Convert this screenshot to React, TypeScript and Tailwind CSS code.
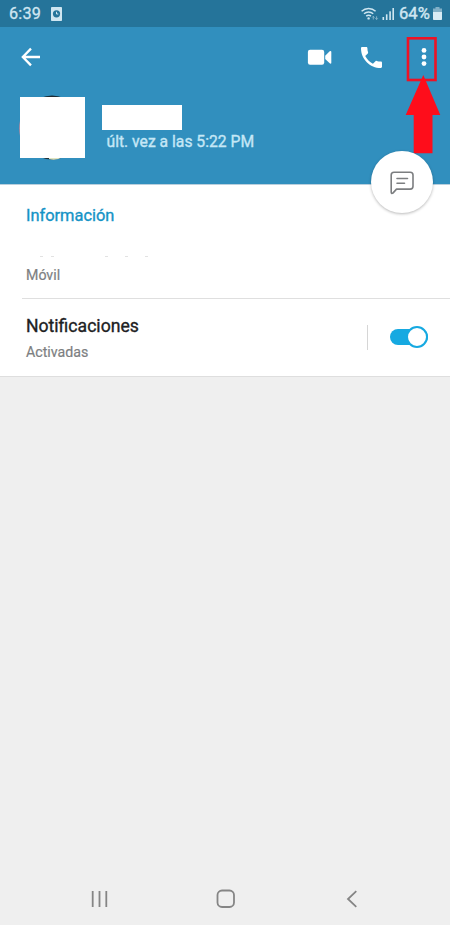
import React, { useState } from 'react';

const StatusBar: React.FC = () => (
  <div className="flex h-[27px] items-center bg-[#25749a] pl-[9px] pr-2 text-[#cfe6f1]">
    <span className="w-[33px] text-[16.2px] leading-[27px] tracking-[0.2px] [-webkit-text-stroke:0.3px]">6:39</span>
    <svg className="ml-[9px] h-[14px] w-[11px]" viewBox="0 0 11 14">
      <rect width="11" height="14" rx="0.8" fill="#cfe6f1" />
      <circle cx="5.5" cy="6.8" r="3.6" fill="#25749a" />
      <path d="M5.5 4.8v2.2h1.8" fill="none" stroke="#cfe6f1" strokeWidth="1" />
    </svg>

    <div className="ml-auto flex items-center">
      {/* Wifi with traffic arrows */}
      <svg className="h-[14px] w-[18px]" viewBox="0 0 18 14" fill="none" stroke="#cfe6f1" strokeWidth="1.5">
        <path d="M0.6 4.2a10.4 10.4 0 0 1 14 0M3 6.8a7 7 0 0 1 9.2 0M5.2 9.2a3.8 3.8 0 0 1 4.8 0" />
        <circle cx="7.6" cy="11.4" r="1.2" fill="#cfe6f1" stroke="none" />
        <path d="M12.3 12.5v-3.2m-1.2 1.2 1.2-1.2 1.2 1.2M15.6 9.3v3.2m-1.2-1.2 1.2 1.2 1.2-1.2" stroke="#8db9ce" strokeWidth="0.9" />
      </svg>
      <svg className="ml-[3px] h-[14px] w-[13px]" viewBox="0 0 13 14" fill="#cfe6f1">
        <rect x="0.5" y="10" width="1.6" height="3" />
        <rect x="3.9" y="7.3" width="1.6" height="5.7" />
        <rect x="7.3" y="4.3" width="1.6" height="8.7" />
        <rect x="10.4" y="1" width="1.6" height="12" />
      </svg>
      <span className="ml-[4px] w-[32px] whitespace-nowrap text-[16.6px] leading-[27px] [-webkit-text-stroke:0.4px]">64%</span>
      <svg className="ml-[2px] h-[13px] w-[9px]" viewBox="0 0 9 13">
        <path d="M2.5 0h4v1.5H9V5H0V1.5h2.5z" fill="#82b0c7" />
        <path d="M0 5h9v7.2a.8.8 0 0 1-.8.8H.8a.8.8 0 0 1-.8-.8z" fill="#d8ebf4" />
      </svg>
    </div>
  </div>
);

const Header: React.FC = () => (
  <header className="relative h-[158px] border-b border-[#b9cfdd] bg-[#318fbe]">
    <div className="flex h-[60px] items-center pl-[21px] pr-[22px]">
      <button aria-label="Atrás">
        <svg className="h-[20px] w-[20px]" viewBox="0 0 20 20" fill="none" stroke="#fff" strokeWidth="2.3">
          <path d="M19 10H2M10 1.6 1.8 10l8.2 8.4" />
        </svg>
      </button>

      <div className="ml-auto flex items-center">
        <svg className="h-[16px] w-[25px]" viewBox="0 0 25 16" fill="#fff">
          <rect x="0.9" y="0.8" width="16.3" height="15" rx="2.2" />
          <path d="M18.2 6.7 22.7 2.3q1.6-1 1.6.6v10.8q0 1.6-1.6.6L18.2 9.9z" />
        </svg>
        <svg className="ml-[29px] h-[21px] w-[21px]" viewBox="3 3 18 18" fill="#fff">
          <path d="M6.62 10.79c1.44 2.83 3.76 5.14 6.59 6.59l2.2-2.2c.27-.27.67-.36 1.02-.24 1.12.37 2.33.57 3.57.57.55 0 1 .45 1 1V20c0 .55-.45 1-1 1-9.39 0-17-7.61-17-17 0-.55.45-1 1-1h3.5c.55 0 1 .45 1 1 0 1.25.2 2.45.57 3.57.11.35.03.74-.25 1.02l-2.2 2.2z" />
        </svg>
        <button className="ml-[38px]" aria-label="Más opciones">
          <svg className="h-[20px] w-[8px]" viewBox="0 0 8 20" fill="#fff">
            <circle cx="4" cy="3.4" r="2.4" />
            <circle cx="4" cy="10" r="2.4" />
            <circle cx="4" cy="16.6" r="2.4" />
          </svg>
        </button>
      </div>
    </div>

    <div className="flex pl-[19px]">
      {/* Avatar, covered by a square patch */}
      <div className="relative mt-2 h-[66px] w-[66px]">
        <svg className="h-[66px] w-[66px]" viewBox="0 0 66 66">
          <path d="M21 3q12-5 24 0z" fill="#1c2a33" />
          <path d="M30 3q3-2 7 0z" fill="#b98f86" />
          <path d="M21 62q12 5 24 0z" fill="#22323a" />
          <path d="M30 62h14q-7 4-14 2z" fill="#dfe3c0" />
          <path d="M1 26q-1.5 7 0 15z" fill="#c98c9c" />
        </svg>
        <div className="absolute left-[1px] top-[2px] h-[61px] w-[65px] bg-white" />
      </div>
      <div className="ml-[17px] pt-[18px]">
        <div className="h-[25px] w-[80px] bg-white" />
        <p className="ml-[4.5px] mt-[2px] whitespace-nowrap text-[15.7px] leading-[20px] text-[#c5e7f6] [-webkit-text-stroke:0.35px]">
          últ. vez a las 5:22 PM
        </p>
      </div>
    </div>

    {/* Pointer to the overflow menu */}
    <svg className="absolute left-[400px] top-0 h-[130px] w-[50px]" viewBox="0 0 50 130">
      <rect x="8" y="11.3" width="27.5" height="41.7" fill="none" stroke="#ed1225" strokeWidth="2.6" />
      <path d="M23.3 48 40.3 88h-7.8v38.3H13.7V88H5.7z" fill="#fe0d1b" />
    </svg>

    <button
      aria-label="Enviar mensaje"
      className="absolute left-[371px] top-[124px] flex h-[62px] w-[62px] items-center justify-center rounded-full bg-white shadow-[0_1px_3px_rgba(0,0,0,0.28)]"
    >
      <svg className="mt-[2px] h-[24px] w-[24px]" viewBox="0 0 24 24" fill="none" stroke="#7c7e80" strokeWidth="1.6" strokeLinejoin="round" strokeLinecap="round">
        <path d="M4 1.3h16.2a2.8 2.8 0 0 1 2.8 2.8v11.2a2.8 2.8 0 0 1-2.8 2.8H6.5l-3.6 4Q1.2 23 1.2 21V4.1A2.8 2.8 0 0 1 4 1.3z" />
        <path d="M7 7.5h10.5M7 12.3h7.5" />
      </svg>
    </button>
  </header>
);

const App: React.FC = () => {
  const [enabled, setEnabled] = useState(true);

  return (
    <div className="flex h-[925px] w-[450px] flex-col overflow-hidden bg-[#efefef] font-['Roboto',sans-serif]">
      <StatusBar />
      <Header />

      <main className="h-[192px] border-b border-[#dedede] bg-white">
        <section className="flex h-[113px] flex-col pl-[26px] pt-[21px]">
          <h2 className="text-[16.4px] leading-[20px] text-[#1593c6] [-webkit-text-stroke:0.35px]">Información</h2>
          {/* Remains of the hidden phone number */}
          <div className="mt-[30px] flex h-px pl-[14px]">
            <i className="h-px w-[3px] bg-[#e2e2e2]" />
            <i className="ml-[8px] h-px w-[3px] bg-[#e2e2e2]" />
            <i className="ml-[51px] h-px w-[3px] bg-[#e2e2e2]" />
            <i className="ml-[17px] h-px w-[3px] bg-[#e2e2e2]" />
            <i className="ml-[17px] h-px w-[3px] bg-[#e2e2e2]" />
          </div>
          <p className="mt-[8px] text-[14.2px] leading-[20px] text-[#7d7f82] [-webkit-text-stroke:0.2px]">Móvil</p>
        </section>

        <section className="ml-[22px] flex h-[78px] items-center border-t border-[#dfdfdf] pl-1 pr-[22.5px]">
          <div className="pt-[3px]">
            <p className="text-[17.6px] leading-[25px] text-[#202122] [-webkit-text-stroke:0.35px]">Notificaciones</p>
            <p className="mt-px text-[14.2px] leading-[24px] text-[#7d7f82] [-webkit-text-stroke:0.2px]">Activadas</p>
          </div>
          <div className="ml-auto h-[25px] w-px bg-[#d6d6d6]" />
          <button
            role="switch"
            aria-checked={enabled}
            aria-label="Notificaciones"
            onClick={() => setEnabled(!enabled)}
            className="mb-px ml-[22px] flex h-[22px] w-[37.5px] items-center"
          >
            <span className={`flex h-[16px] w-full items-center rounded-full ${enabled ? 'justify-end bg-[#16a9e1]' : 'bg-gray-400'}`}>
              <span className={`h-[22px] w-[22px] rounded-full border-2 bg-white ${enabled ? 'border-[#16a9e1]' : 'border-gray-400'}`} />
            </span>
          </button>
        </section>
      </main>

      <nav className="mt-auto flex h-[53px] items-center justify-between pl-[91px] pr-[92px]">
        <svg className="h-[18px] w-[18px]" viewBox="0 0 18 18" stroke="#858585" strokeWidth="1.8">
          <path d="M1.7 1v16M8.5 1v16M15.3 1v16" />
        </svg>
        <svg className="mr-[4px] h-[20px] w-[20px]" viewBox="0 0 20 20" fill="none" stroke="#858585" strokeWidth="1.8">
          <rect x="1.5" y="1.5" width="16.5" height="16.5" rx="4.5" />
        </svg>
        <svg className="h-[18px] w-[12px]" viewBox="0 0 12 18" fill="none" stroke="#858585" strokeWidth="1.8">
          <path d="M10.3 1.2 2 9l8.3 7.8" />
        </svg>
      </nav>
    </div>
  );
};

export default App;
